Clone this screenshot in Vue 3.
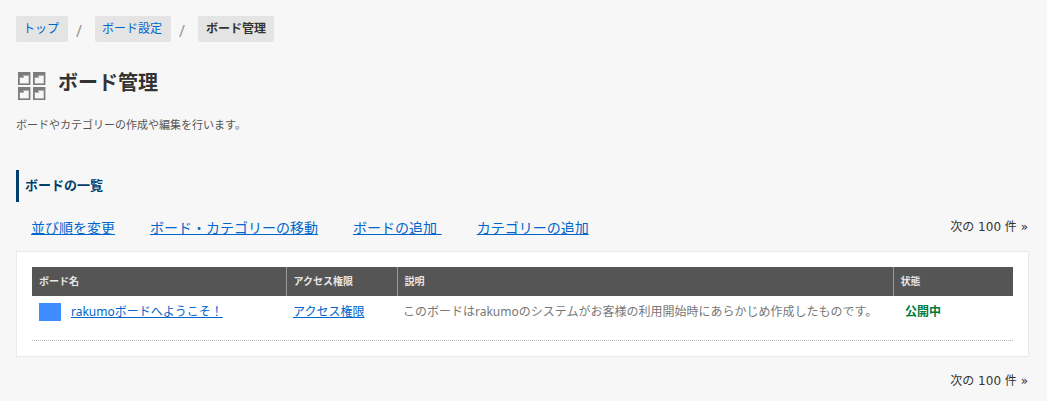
<script setup>
const actions = [
  { label: '並び順を変更', cls: 'order' },
  { label: 'ボード・カテゴリーの移動', cls: 'move' },
  { label: 'ボードの追加\u00a0', cls: 'board' },
  { label: 'カテゴリーの追加', cls: 'category' },
]
const tiles = [[0, 0], [15, 0], [0, 15], [15, 15]]
</script>

<template>
  <main class="page">
    <nav class="crumbs">
      <a class="crumb" href="#">トップ</a>
      <span class="slash">/</span>
      <a class="crumb" href="#">ボード設定</a>
      <span class="slash">/</span>
      <span class="crumb current">ボード管理</span>
    </nav>

    <header class="title">
      <svg class="icon" width="28" height="29" viewBox="0 0 28 29">
        <g v-for="([x, y], i) in tiles" :key="i" :transform="`translate(${x} ${y})`">
          <rect width="12.4" height="13" fill="#7c7c7c" />
          <path d="M1.5 5H5V3H11V11.5H1.5Z" fill="#adadad" />
          <path d="M2 6H6V4H10.5V11.3H2Z" fill="#f7f7f7" />
        </g>
      </svg>
      <h1>ボード管理</h1>
    </header>
    <p class="lead">ボードやカテゴリーの作成や編集を行います。</p>

    <h2>ボードの一覧</h2>

    <div class="toolbar">
      <div class="actions">
        <a v-for="a in actions" :key="a.cls" :class="a.cls" href="#">{{ a.label }}</a>
      </div>
      <span class="pager">次の 100 件 »</span>
    </div>

    <section class="panel">
      <div class="row head">
        <div>ボード名</div>
        <div>アクセス権限</div>
        <div>説明</div>
        <div>状態</div>
      </div>
      <div class="row body">
        <div class="name"><i class="swatch"></i><a href="#">rakumoボードへようこそ！</a></div>
        <div><a href="#">アクセス権限</a></div>
        <div class="desc">このボードはrakumoのシステムがお客様の利用開始時にあらかじめ作成したものです。</div>
        <div class="status">公開中</div>
      </div>
    </section>

    <div class="footer"><span class="pager">次の 100 件 »</span></div>
  </main>
</template>

<style>
html, body { background: #f7f7f7; }
</style>

<style scoped>
.page {
  box-sizing: border-box;
  height: 401px;
  padding: 16px 18px 0 16px;
  overflow: hidden;
  font-family: "Noto Sans", "Noto Sans CJK JP", sans-serif;
  font-size: 12px;
  line-height: 18px;
  color: #333;
  white-space: nowrap;
}
a { color: #0066cc; text-underline-offset: 1px; text-decoration-thickness: 1px; text-decoration-skip-ink: none; }
.crumbs { display: flex; height: 26px; }
.crumb {
  box-sizing: border-box;
  height: 26px;
  padding: 0 9px 0 7px;
  border-radius: 2px;
  background: #e4e4e4;
  line-height: 25px;
  text-decoration: none;
}
.current { padding: 0 8px; font-weight: bold; }
.slash { width: 27px; padding-left: 8px; box-sizing: border-box; color: #999; font-size: 16px; line-height: 30px; }
.title { display: flex; height: 30px; margin-top: 28px; }
.icon { margin: 2px 14px 0 1.6px; width: 28px; flex: none; }
h1 { margin: 1px 0 0 -1.6px; font-size: 20px; line-height: 24px; }
.lead { margin: 16px 0 0; font-size: 11px; line-height: 18px; color: #555; }
h2 {
  box-sizing: border-box;
  height: 32px;
  margin: 36px 0 0;
  padding-left: 6px;
  border-left: 3px solid #003e6b;
  color: #003e6b;
  font-size: 13px;
  line-height: 31px;
}
.toolbar { display: flex; justify-content: space-between; height: 49px; padding: 0 1px 0 15px; }
.actions { display: flex; gap: 35px; padding-top: 15px; font-size: 14px; line-height: 22px; }
.board { word-spacing: 1px; }
.pager { padding-top: 15px; font-family: "DejaVu Sans", "Noto Sans CJK JP", sans-serif; line-height: 20px; }
.panel { box-sizing: border-box; height: 106px; padding: 15px; border: 1px solid #ebebeb; background: #fff; }
.row { display: grid; grid-template-columns: 254px 111px 496px 1fr; }
.head { height: 29px; background: #555; color: #e6e6e6; font-size: 10px; font-weight: bold; line-height: 29px; }
.head div { padding-left: 7px; }
.head div + div { padding-left: 6.5px; border-left: 1px solid #999; }
.body { box-sizing: border-box; height: 45px; border-bottom: 1px dotted #bbb; line-height: 32px; }
.body > div { padding-left: 7px; }
.name { display: flex; }
.swatch { width: 22px; height: 18px; margin: 7px 10px 0 0; background: #3f8cff; }
.body > .desc { padding-left: 6px; color: #777; }
.body > .status { padding-left: 12px; color: #007a3d; font-weight: bold; }
.footer { display: flex; justify-content: flex-end; padding: 0 1px 0 0; }
.footer .pager { padding-top: 14px; }
</style>
